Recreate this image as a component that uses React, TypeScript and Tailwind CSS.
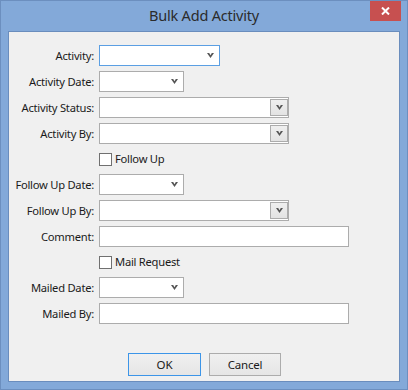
import React from "react";

const font = { fontFamily: '"Segoe UI", "Noto Sans", "Open Sans", sans-serif' };

function Chevron() {
  return (
    <svg width="7" height="5" viewBox="0 0 7 5" className="block">
      <path d="M0 0H2.2L3.5 2.2L4.8 0H7L3.5 5Z" fill="#555555" />
    </svg>
  );
}

function DropList({ w, focused }: { w: string; focused?: boolean }) {
  return (
    <div
      className={`${w} h-[21px] bg-white border ${
        focused ? "border-[#5b9fe3]" : "border-[#acacac]"
      } flex items-center justify-end pr-[5px]`}
    >
      <Chevron />
    </div>
  );
}

function Combo() {
  return (
    <div className="w-[190px] h-[21px] bg-white border border-[#acacac] flex justify-end p-px pr-0">
      <div className="w-[18px] h-full border border-[#acacac] bg-gradient-to-b from-[#efefef] to-[#e3e3e3] flex items-center justify-center">
        <Chevron />
      </div>
    </div>
  );
}

function TextBox() {
  return <div className="w-[250px] h-[21px] bg-white border border-[#acacac]" />;
}

function Row({ label, children, h = "h-[21px]" }: { label?: string; children: React.ReactNode; h?: string }) {
  return (
    <div className={`flex items-center ${h}`}>
      <div className="w-[86px] text-right pr-px text-[11.2px] text-[#1a1a1a] leading-none whitespace-nowrap tracking-[-0.25px]">
        {label ? `${label}:` : ""}
      </div>
      <div className="ml-[4px] flex items-center">{children}</div>
    </div>
  );
}

function Check({ label }: { label: string }) {
  return (
    <div className="flex items-center">
      <div className="w-[13px] h-[13px] bg-white border border-[#707070]" />
      <span className="ml-[3px] text-[11.2px] tracking-[-0.25px] text-[#1a1a1a] leading-none whitespace-nowrap">{label}</span>
    </div>
  );
}

export default function App() {
  return (
    <div style={font} className="w-[408px] h-[390px] bg-[#83a9d9] border border-[#6c8fbf] flex flex-col px-[7px] pb-[7px]">
      <div className="h-[30px] relative flex items-center justify-center">
        <span className="text-[14.5px] tracking-[-0.2px] text-[#2b2b2b] leading-none -mt-[1px] whitespace-nowrap">Bulk Add Activity</span>
        <div className="absolute right-[-1px] top-0 w-[31px] h-[20px] bg-[#c75050] flex items-center justify-center">
          <svg width="9" height="8" viewBox="0 0 9 8">
            <path d="M1 0.5L8 7.5M8 0.5L1 7.5" stroke="white" strokeWidth="2" />
          </svg>
        </div>
      </div>
      <div className="flex-1 bg-[#f0f0f0] border border-[#6a8dbd] flex flex-col pt-[13px]">
        <div className="flex flex-col gap-[5px]">
          <Row label="Activity">
            <DropList w="w-[121px]" focused />
          </Row>
          <Row label="Activity Date">
            <DropList w="w-[85px]" />
          </Row>
          <Row label="Activity Status">
            <Combo />
          </Row>
          <Row label="Activity By">
            <Combo />
          </Row>
          <Row h="h-[20px]">
            <Check label="Follow Up" />
          </Row>
          <Row label="Follow Up Date">
            <DropList w="w-[85px]" />
          </Row>
          <Row label="Follow Up By">
            <Combo />
          </Row>
          <Row label="Comment">
            <TextBox />
          </Row>
          <Row h="h-[20px]">
            <Check label="Mail Request" />
          </Row>
          <Row label="Mailed Date">
            <DropList w="w-[85px]" />
          </Row>
          <Row label="Mailed By">
            <TextBox />
          </Row>
        </div>
        <div className="mt-[29px] flex justify-center gap-[8px] pl-[1px]">
          <div className="w-[73px] h-[23px] border border-[#3c95e8] bg-gradient-to-b from-[#f0f0f0] to-[#e5e5e5] flex items-center justify-center text-[11.5px] text-[#1a1a1a] leading-none">
            OK
          </div>
          <div className="w-[72px] h-[23px] border border-[#acacac] bg-gradient-to-b from-[#f0f0f0] to-[#e5e5e5] flex items-center justify-center text-[11.5px] tracking-[-0.2px] text-[#1a1a1a] leading-none">
            Cancel
          </div>
        </div>
      </div>
    </div>
  );
}
